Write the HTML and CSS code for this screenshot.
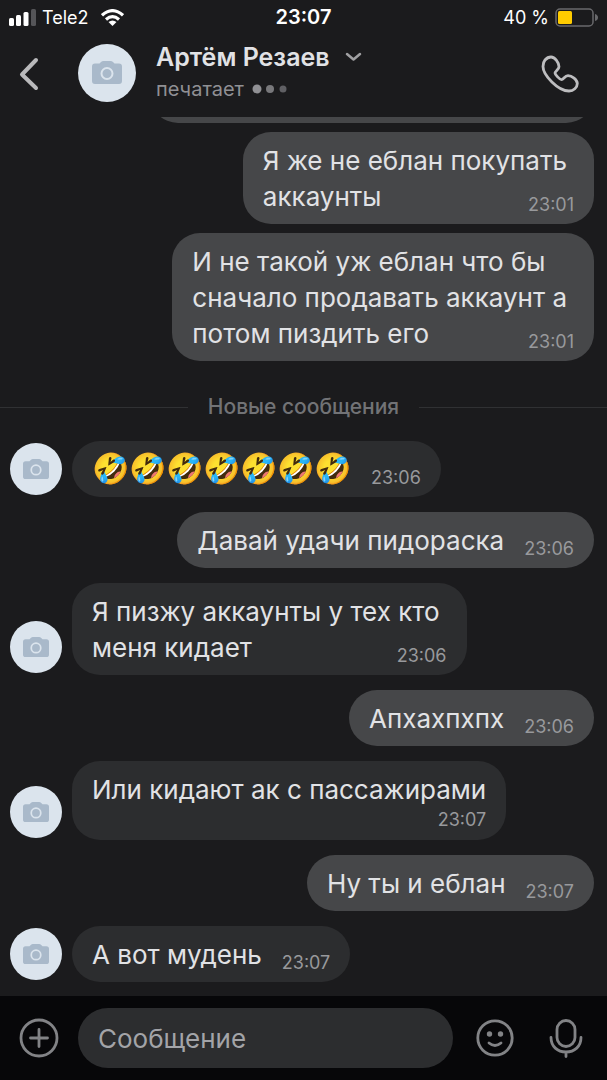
FILE: index.html
```html
<!DOCTYPE html>
<html lang="ru">
<head>
    <meta charset="UTF-8">
    <meta name="viewport" content="width=device-width, initial-scale=1.0">
    <title>Артём Резаев</title>
    <link rel="stylesheet" href="styles.css">
</head>
<body>
    <svg class="sprite" aria-hidden="true">
        <symbol id="camera" viewBox="0 0 30 24">
            <path fill="#a9b9ca" d="M3 2.500h4.500l1.500-1.500q1-1 2.500-1h7q1.500 0 2.500 1l1.500 1.500H27q3 0 3 3V20q0 3-3 3H3q-3 0-3-3V5.500q0-3 3-3z"/>
            <circle cx="15" cy="12.500" r="5.500" fill="none" stroke="#dbe4ed" stroke-width="2"/>
        </symbol>
    </svg>
    <div class="status-bar">
        <div class="status-left">
            <svg width="27" height="17" viewBox="0 0 27 17" fill="#fff">
                <rect x="0" y="9" width="5" height="8" rx="1.500"/>
                <rect x="7" y="6" width="5" height="11" rx="1.500"/>
                <rect x="14.500" y="3" width="5" height="14" rx="1.500"/>
                <rect x="22" y="0" width="5" height="17" rx="1.500" fill="#555558"/>
            </svg>
            <span>Tele2</span>
            <svg class="wifi" width="23" height="17" viewBox="0 0 23 17" fill="none" stroke="#fff" stroke-width="3.200">
                <path d="M1 6.300Q11.500-3 22 6.300"/>
                <path d="M5 10.500q6.500-5.600 13 0"/>
                <path fill="#fff" stroke="none" d="M7.500 13q4-3.200 8 0l-4 4z"/>
            </svg>
        </div>
        <b>23:07</b>
        <div class="status-right">
            <span>40 %</span>
            <svg width="43" height="19" viewBox="0 0 43 19">
                <rect x="1" y="1" width="37" height="17" rx="4" fill="none" stroke="#69696c" stroke-width="1.500"/>
                <rect x="3" y="3" width="14" height="13" rx="1.500" fill="#ffcc00"/>
                <path d="M40 6q3 1 3 3.500T40 13z" fill="#69696c"/>
            </svg>
        </div>
    </div>
    <header class="header">
        <button class="icon-btn" aria-label="Назад">
            <svg width="20" height="34" viewBox="0 0 20 34" fill="none" stroke="#b9b9bb" stroke-width="4" stroke-linecap="round" stroke-linejoin="round">
                <path d="M17 3L3 17.500 17 31"/>
            </svg>
        </button>
        <div class="avatar avatar-big"><svg width="30" height="24"><use href="#camera"/></svg></div>
        <div class="contact">
            <h1>Артём Резаев
                <svg width="17" height="10" viewBox="0 0 17 10" fill="none" stroke="#a0a0a2" stroke-width="2.500" stroke-linecap="round" stroke-linejoin="round">
                    <path d="M2 2l6.500 5.500L15 2"/>
                </svg>
            </h1>
            <p>печатает
                <svg width="36" height="10" viewBox="0 0 36 10" fill="#909094">
                    <circle cx="5" cy="5" r="4.500"/>
                    <circle cx="18" cy="5" r="4" opacity=".8"/>
                    <circle cx="31" cy="5" r="3.500" opacity=".6"/>
                </svg>
            </p>
        </div>
        <button class="icon-btn" aria-label="Позвонить">
            <svg width="38" height="38" viewBox="0 0 38 38" fill="none" stroke="#bdbdbf" stroke-width="2.800" stroke-linejoin="round">
                <path d="M4 5C6 2.700 7.800 2 10 2c4 0 8 5.500 8 9.800 0 2.800-4 4.200-4 6.200 0 1.600 4.700 6.600 6.500 6.600 2 0 3.200-4 6.500-4 3.800 0 9.300 4 9.300 7.900 0 4-3.800 7.500-8.300 7.500C17 36 2 20 2 11.500 2 9 2.500 6.800 4 5z"/>
            </svg>
        </button>
    </header>
    <main class="chat">
        <div class="row out"><div class="bubble previous"></div></div>
        <div class="row out next">
            <div class="bubble multi">Я же не еблан покупать<br>аккаунты<time>23:01</time></div>
        </div>
        <div class="row out next">
            <div class="bubble multi">И не такой уж еблан что бы<br>сначало продавать аккаунт а<br>потом пиздить его<time>23:01</time></div>
        </div>
        <div class="divider">Новые сообщения</div>
        <div class="row">
            <div class="avatar"><svg width="26" height="21"><use href="#camera"/></svg></div>
            <div class="bubble"><span class="emoji">🤣🤣🤣🤣🤣🤣🤣</span><time>23:06</time></div>
        </div>
        <div class="row out">
            <div class="bubble">Давай удачи пидораска<time>23:06</time></div>
        </div>
        <div class="row">
            <div class="avatar"><svg width="26" height="21"><use href="#camera"/></svg></div>
            <div class="bubble multi">Я пизжу аккаунты у тех кто<br>меня кидает<time>23:06</time></div>
        </div>
        <div class="row out">
            <div class="bubble">Апхахпхпх<time>23:06</time></div>
        </div>
        <div class="row">
            <div class="avatar"><svg width="26" height="21"><use href="#camera"/></svg></div>
            <div class="bubble">Или кидают ак с пассажирами<time class="below">23:07</time></div>
        </div>
        <div class="row out">
            <div class="bubble">Ну ты и еблан<time>23:07</time></div>
        </div>
        <div class="row">
            <div class="avatar"><svg width="26" height="21"><use href="#camera"/></svg></div>
            <div class="bubble">А вот мудень<time>23:07</time></div>
        </div>
    </main>
    <form class="composer">
        <button type="button" class="icon-btn" aria-label="Прикрепить">
            <svg width="40" height="40" viewBox="0 0 40 40" fill="none" stroke="#828386" stroke-width="2.800" stroke-linecap="round">
                <circle cx="20" cy="20" r="18"/>
                <path d="M20 11.500v17M11.500 20h17"/>
            </svg>
        </button>
        <input type="text" placeholder="Сообщение" aria-label="Сообщение">
        <button type="button" class="icon-btn" aria-label="Смайлы">
            <svg width="40" height="40" viewBox="0 0 40 40" fill="none" stroke="#828386" stroke-width="2.800" stroke-linecap="round">
                <circle cx="20" cy="20" r="17.200"/>
                <path d="M14 25q6 5 12 0"/>
                <g fill="#828386" stroke="none"><circle cx="14.500" cy="16" r="2.700"/><circle cx="25.500" cy="16" r="2.700"/></g>
            </svg>
        </button>
        <button type="button" class="icon-btn" aria-label="Голосовое сообщение">
            <svg width="40" height="40" viewBox="0 0 40 40" fill="none" stroke="#828386" stroke-width="2.800" stroke-linecap="round">
                <rect x="11" y="2.500" width="18" height="26" rx="9"/>
                <path d="M5 19.500c0 9 6.500 14.500 15 14.500s15-5.500 15-14.500M20 34v4.500"/>
            </svg>
        </button>
    </form>
</body>
</html>
```
FILE: styles.css
```css
* {
    box-sizing: border-box;
}
body {
    margin: 0;
    height: 100vh;
    display: flex;
    flex-direction: column;
    background-color: #1b1b1d;
    color: #e1e2e5;
    font-family: 'Inter', sans-serif;
}
svg {
    display: block;
}
.sprite {
    display: none;
}
.status-bar {
    display: grid;
    grid-template-columns: 1fr auto 1fr;
    align-items: center;
    height: 34px;
    padding: 0 9px;
    font-size: 18px;
    color: #fff;
}
.status-bar b {
    font-size: 20px;
    font-weight: 600;
}
.status-left, .status-right {
    display: flex;
    align-items: center;
    gap: 6px;
}
.wifi {
    margin-left: 6px;
}
.status-right {
    justify-content: flex-end;
}
.header {
    display: flex;
    align-items: center;
    height: 83px;
    padding: 0 28px 10px 19px;
}
.icon-btn {
    padding: 0;
    border: none;
    background: none;
    cursor: pointer;
}
.header .icon-btn {
    margin-top: 6px;
}
.avatar {
    display: flex;
    justify-content: center;
    align-items: center;
    flex-shrink: 0;
    width: 52px;
    height: 52px;
    margin: 0 10px 2px 0;
    border-radius: 50%;
    background-color: #dbe4ed;
}
.avatar-big {
    width: 58px;
    height: 58px;
    margin: 4px 20px 0 39px;
}
.contact {
    flex: 1;
    margin-top: 2px;
}
.contact h1, .contact p {
    display: flex;
    align-items: center;
    margin: 0;
}
.contact h1 {
    gap: 15px;
    font-size: 25px;
    line-height: 34px;
    font-weight: 600;
}
.contact p {
    gap: 8px;
    font-size: 20px;
    line-height: 30px;
    color: #909094;
}
.chat {
    flex: 1;
    min-height: 0;
    display: flex;
    flex-direction: column;
    justify-content: flex-end;
    gap: 15px;
    padding: 0 13px 14px 10px;
    overflow: hidden;
}
.row {
    display: flex;
    align-items: flex-end;
    flex-shrink: 0;
}
.out {
    justify-content: flex-end;
}
.next {
    margin-top: -6px;
}
.bubble {
    padding: 11px 20px 9px;
    border-radius: 28px;
    background-color: #2c2d2f;
    font-size: 26px;
    line-height: 36px;
    white-space: nowrap;
}
.out .bubble {
    background-color: #464749;
}
.multi {
    padding-right: 27px;
}
.multi time {
    margin-right: -7px;
}
.previous {
    width: 76%;
    height: 56px;
}
.emoji {
    font-size: 30px;
    line-height: 30px;
}
time {
    float: right;
    margin: 16px 0 0 20px;
    font-size: 18px;
    line-height: 20px;
    color: #98999c;
}
time.below {
    float: none;
    display: block;
    margin: 0;
    line-height: 23px;
    text-align: right;
}
.divider {
    display: flex;
    align-items: center;
    gap: 20px;
    flex-shrink: 0;
    margin: 16px -13px 4px -10px;
    font-size: 21px;
    line-height: 30px;
    font-weight: 500;
    color: #727376;
}
.divider::before, .divider::after {
    content: '';
    flex: 1;
    height: 1px;
    background-color: #303133;
}
.composer {
    display: flex;
    align-items: center;
    flex-shrink: 0;
    height: 84px;
    padding: 0 21px 0 19px;
    background-color: #070709;
}
.composer input {
    flex: 1;
    min-width: 0;
    height: 60px;
    margin: 0 22px 0 19px;
    padding: 0 20px;
    border: none;
    border-radius: 30px;
    background-color: #2c2d2f;
    color: #e1e2e5;
    font-family: inherit;
    font-size: 26px;
}
.composer input::placeholder {
    color: #a3a4a8;
    opacity: 1;
}
.composer .icon-btn:last-child {
    margin-left: 31px;
}
```
